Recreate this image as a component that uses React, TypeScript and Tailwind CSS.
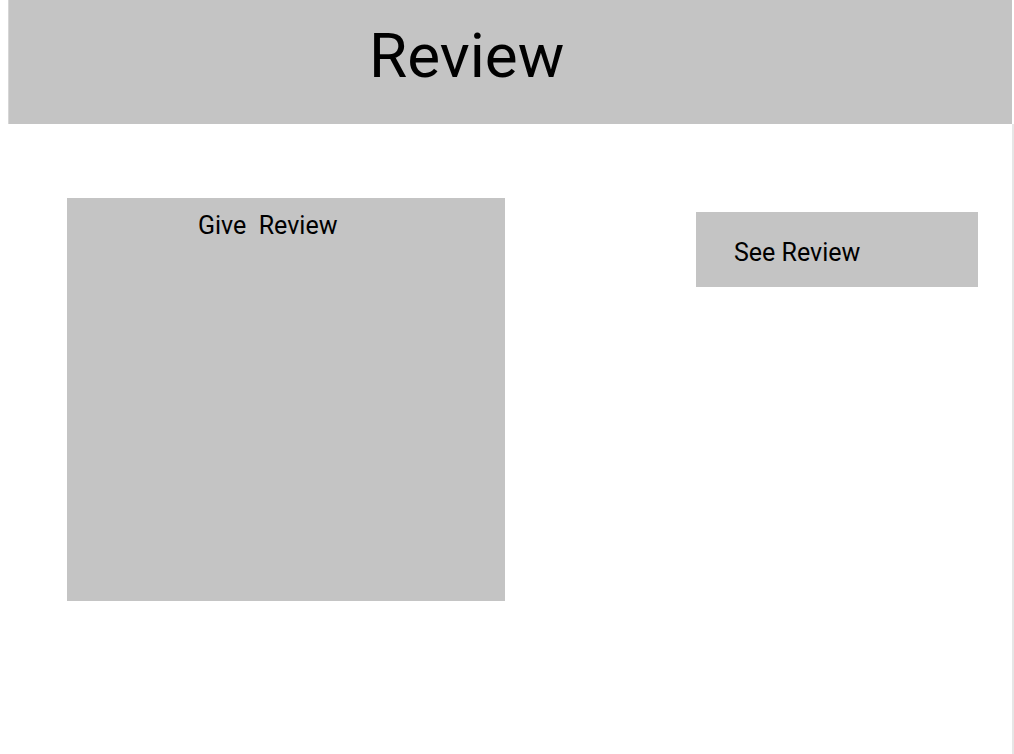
export default function App() {
  return (
    <div className="relative w-[1014px] h-[754px] bg-white overflow-hidden" style={{ fontFamily: "Roboto, 'Liberation Sans', sans-serif" }}>
      <div className="ml-[8px] w-[1004px] h-[124px] bg-[#c4c4c4] border-l border-[#d6d6d6] pl-[360px] pt-[25px]">
        <h1 className="text-[62px] leading-none text-black font-normal">Review</h1>
      </div>
      <div className="absolute left-[1012px] top-[124px] w-[2px] h-[630px] bg-[#e6e6e6]" />
      <div className="flex items-start mt-[74px]">
        <div className="ml-[67px] w-[438px] h-[403px] bg-[#c4c4c4] pt-[15px] pl-[131px]">
          <span className="block text-[25px] leading-none text-black whitespace-pre">Give  Review</span>
        </div>
        <div className="ml-[191px] mt-[14px] w-[282px] h-[75px] bg-[#c4c4c4] pt-[28px] pl-[38px]">
          <span className="block text-[25px] leading-none text-black">See Review</span>
        </div>
      </div>
    </div>
  );
}
